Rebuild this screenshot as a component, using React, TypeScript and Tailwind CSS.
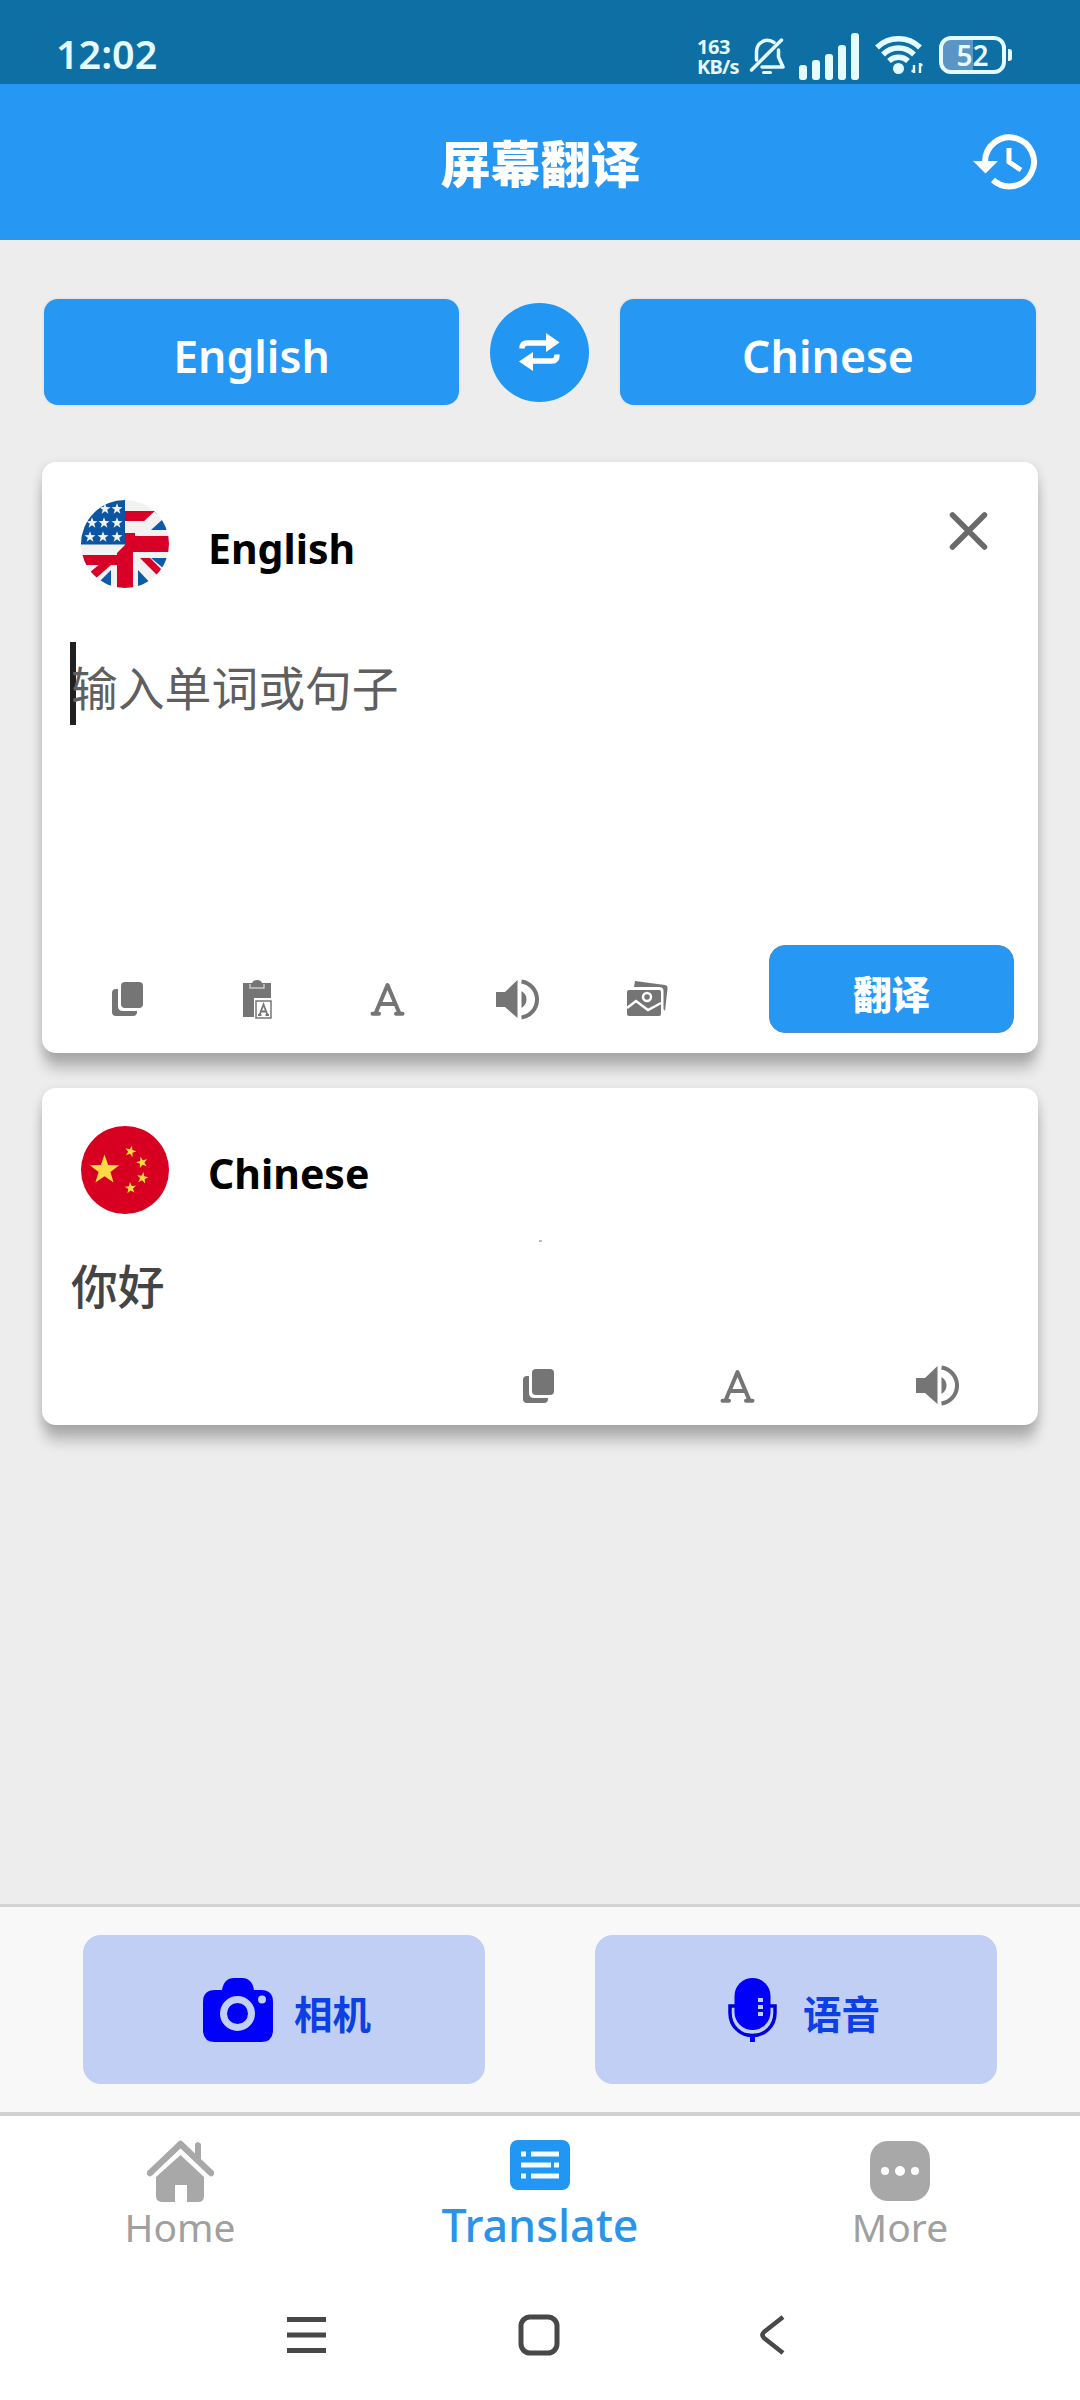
import React from "react";

const LATIN = "font-['Noto_Sans','Noto_Sans_CJK_SC',sans-serif]";
const CJK = "font-['Noto_Sans_CJK_SC',sans-serif]";

type IconProps = { className?: string };

function star(cx: number, cy: number, r: number, rot = 0) {
  return Array.from({ length: 10 }, (_, i) => {
    const radius = i % 2 ? r * 0.4 : r;
    const a = ((i * 36 - 90 + rot) * Math.PI) / 180;
    return `${(cx + radius * Math.cos(a)).toFixed(2)},${(cy + radius * Math.sin(a)).toFixed(2)}`;
  }).join(" ");
}

function CopyIcon({ className = "" }: IconProps) {
  return (
    <svg className={`h-[34px] w-[31px] ${className}`} viewBox="0 0 31 34" fill="#757575">
      <rect x="9" y="0" width="22" height="26" rx="4" />
      <path d="M0 11Q0 7 4 7H6V24Q6 29 11 29H25V30Q25 34 21 34H4Q0 34 0 30Z" />
    </svg>
  );
}

function PasteIcon() {
  return (
    <svg className="h-[39px] w-[29px]" viewBox="0 0 29 39">
      <path d="M0 3H9Q10 0 14 0Q18 0 19 3H28V18H11V37H0Z" fill="#757575" />
      <path d="M7 4V8H21V4" fill="none" stroke="#c8c8c8" strokeWidth="1.5" />
      <rect x="13" y="21" width="15" height="17" fill="#fff" stroke="#757575" strokeWidth="1.5" />
      <path d="M16.5 35L20.5 24.5L24.5 35M18 31.5H23M15 35H18.5M22.500 35H26" fill="none" stroke="#757575" strokeWidth="1.8" />
    </svg>
  );
}

function LetterIcon({ className = "" }: IconProps) {
  return (
    <svg className={`h-[34px] w-[35px] ${className}`} viewBox="0 0 35 34" fill="none" stroke="#757575" strokeWidth="4" strokeLinecap="round" strokeLinejoin="round">
      <path d="M5.500 31.500L17.500 3L29.500 31.500M10 22H25M2.500 31.800H9M26 31.800H32.500" />
    </svg>
  );
}

function SpeakerIcon({ className = "" }: IconProps) {
  return (
    <svg className={`h-[41px] w-[43px] ${className}`} viewBox="0 0 43 41" fill="#757575">
      <path d="M0 13H9L21.500 1V39L9 28H0Z" />
      <path d="M25.500 12Q30.500 15 30.500 20.500T25.500 29Z" />
      <path d="M25.500 2.500A18.200 18.200 0 0 1 25.500 38.500" fill="none" stroke="#757575" strokeWidth="4" />
    </svg>
  );
}

function GalleryIcon() {
  return (
    <svg className="h-[36px] w-[41px]" viewBox="0 0 41 36">
      <path d="M8 0L38 4Q41 4.500 40.500 8L38 30L36.500 28V10Q36.500 6 32 6H7Z" fill="#757575" />
      <rect x="0" y="9" width="34" height="26" rx="2" fill="#757575" />
      <path d="M0 27L9 20L21 29L34 22" fill="none" stroke="#fff" strokeWidth="2.500" />
      <circle cx="20" cy="16" r="4" fill="none" stroke="#fff" strokeWidth="2.500" />
    </svg>
  );
}

function EnglishFlag() {
  const stars = [
    [24, 9], [36, 9], [11, 23], [23, 23], [36, 23], [9, 37], [22, 37], [36, 37],
  ];
  return (
    <svg className="h-[88px] w-[88px]" viewBox="0 0 88 88">
      <defs>
        <clipPath id="disc"><circle cx="44" cy="44" r="44" /></clipPath>
      </defs>
      <g clipPath="url(#disc)">
        <rect width="88" height="88" fill="#f2f2f2" />
        <path d="M44 11H76V21H44ZM0 55H36V65H0Z" fill="#d80027" />
        <path d="M30 65L14 79L8 73L20 63Z" fill="#d80027" />
        <path d="M88 58V73L70 58ZM57 70L74 88H57ZM30 70V88H12Z" fill="#0d5ba8" />
        <path d="M76 9L61 23H44V33H88V9Z" fill="#f2f2f2" />
        <path d="M88 14V30H70L82 19Z" fill="#0d5ba8" />
        <path d="M59 58L78 77L83 72L69 58Z" fill="#d80027" />
        <path d="M44 33H54V36H88V52H52V88H36V53L44 45Z" fill="#d80027" />
        <rect width="44" height="44.500" fill="#0b55a3" />
        {stars.map(([x, y]) => (
          <polygon key={`${x}-${y}`} points={star(x, y, 5.8)} fill="#f2f2f2" />
        ))}
      </g>
    </svg>
  );
}

function ChineseFlag() {
  return (
    <svg className="h-[88px] w-[88px]" viewBox="0 0 88 88">
      <circle cx="44" cy="44" r="44" fill="#d80021" />
      <g fill="#ffda44">
        <polygon points={star(23.5, 44, 15.5)} />
        <polygon points={star(49.500, 25.500, 6, 15)} />
        <polygon points={star(61, 36.500, 6, -15)} />
        <polygon points={star(61.500, 52, 6, 10)} />
        <polygon points={star(49.500, 62, 6, -5)} />
      </g>
    </svg>
  );
}

function StatusBar() {
  return (
    <div className="flex h-[84px] items-start bg-[#0e6fa5] text-[#e4fbff]">
      <div className={`${LATIN} mt-[29px] ml-[56px] w-[641px] text-[39.5px] leading-[50px] font-semibold`}>12:02</div>
      <div className={`${LATIN} mt-[37px] w-[52px] text-[20px] leading-[20px] font-bold whitespace-nowrap`}>
        <div className="tracking-[-0.4px]">163</div>
        <div className="tracking-[-0.8px]">KB/s</div>
      </div>
      <svg className="mt-[36px] h-[40px] w-[37px]" viewBox="0 0 37 40" fill="none" stroke="currentColor" strokeWidth="3.5" strokeLinecap="round" strokeLinejoin="round">
        <path d="M2.500 34L32.500 4" />
        <path d="M7.500 24V15A11 11 0 0 1 25 6.500" />
        <path d="M29.500 14V21L34 31H13" />
        <path d="M14.500 36.500H21.500" strokeWidth="3" />
      </svg>
      <div className="mt-[33px] ml-[13px] flex h-[47px] w-[62px] items-end gap-[5px]">
        <i className="h-[15px] w-2 rounded-[3px] bg-current" />
        <i className="h-[20px] w-2 rounded-[3px] bg-current" />
        <i className="h-[26px] w-2 rounded-[3px] bg-current" />
        <i className="h-[35px] w-2 rounded-[3px] bg-current" />
        <i className="h-[47px] w-2 rounded-[3px] bg-current" />
      </div>
      <svg className="mt-[34px] ml-[14px] h-[41px] w-[49px]" viewBox="0 0 49 41" fill="none" stroke="currentColor" strokeWidth="5.500">
        <path d="M2 13.500A31 31 0 0 1 45 13.500" />
        <path d="M8 20.500A22 22 0 0 1 39 20.500" />
        <path d="M14 27A14 14 0 0 1 33 27" />
        <circle cx="23.500" cy="34.500" r="5.500" fill="currentColor" stroke="none" />
        <path d="M39 31V39M45 29V39M36.500 37H39M45 31H47.500" strokeWidth="2.400" />
      </svg>
      <div className="mt-[36px] ml-[15px] flex items-center">
        <div className={`${LATIN} flex h-[38px] w-[67px] items-center justify-center rounded-[12px] border-4 border-current bg-linear-to-r from-[#5a95c6] from-50% to-[#0e6fa5] to-50% text-[28px] leading-none font-semibold`}>
          52
        </div>
        <div className="ml-[2px] h-3 w-[4px] rounded-r-[3px] bg-current" />
      </div>
    </div>
  );
}

function Header() {
  return (
    <header className="flex h-[156px] items-center justify-between bg-[#2697f2] pr-[42px] pl-[109px]">
      <span />
      <h1 className={`${CJK} -mt-[3px] text-[50px] leading-[60px] font-black text-white`}>屏幕翻译</h1>
      <svg className="-mt-0.5 h-[58px] w-[66px]" viewBox="972 133 66 58" fill="none" stroke="#fff" strokeWidth="6">
        <path d="M985 163A24.500 24.500 0 1 1 993 181" />
        <path d="M973 162H998L985.500 174.500Z" fill="#fff" stroke="none" />
        <path d="M1009 149V163L1021 171" strokeWidth="5" />
      </svg>
    </header>
  );
}

function LanguagePicker() {
  return (
    <div className={`${LATIN} mt-[59px] flex items-center justify-between px-11 text-[44.5px] font-semibold text-white`}>
      <button className="h-[106px] w-[415px] rounded-[14px] bg-[#2697f2] pt-2 shadow-[0_0_2px_1px_#e3e3e3]">English</button>
      <button className="flex size-[99px] items-center justify-center rounded-full bg-[#2196f3]">
        <svg className="h-[38px] w-[41px]" viewBox="0 0 41 38" fill="none" stroke="#fff" strokeWidth="5.500">
          <path d="M3 15.500Q3 10 8 10H29" />
          <path d="M38 21.500Q38 28 33 28H12" />
          <path d="M27 0V19L40.500 9.500Z" fill="#fff" stroke="none" />
          <path d="M14 19V38L0 28.500Z" fill="#fff" stroke="none" />
        </svg>
      </button>
      <button className="h-[106px] w-[416px] rounded-[14px] bg-[#2697f2] pt-2 shadow-[0_0_2px_1px_#e3e3e3]">Chinese</button>
    </div>
  );
}

const CARD = "mx-[42px] rounded-[14px] bg-white shadow-[0_18px_14px_-2px_rgba(0,0,0,0.22),0_4px_10px_2px_rgba(0,0,0,0.11)]";

function SourceCard() {
  return (
    <section className={`${CARD} mt-[57px] flex h-[591px] flex-col`}>
      <div className="flex h-[126px] items-end pl-[39px]">
        <EnglishFlag />
        <span className={`${LATIN} mb-[12px] ml-[39px] text-[41px] leading-[56px] font-bold text-black`}>English</span>
        <svg className="mr-[50px] mb-[38px] ml-auto h-[38px] w-[39px]" viewBox="0 0 39 38" fill="none" stroke="#6a6a6a" strokeWidth="5.500" strokeLinecap="round">
          <path d="M3.500 3L35.500 35M35.500 3L3.500 35" />
        </svg>
      </div>
      <div className="mt-[54px] ml-[28px] flex h-[83px] items-center">
        <i className="h-full w-[6px] bg-[#202020]" />
        <span className={`${CJK} -ml-[5px] pt-[5px] text-[46.8px] leading-[60px] text-[#5f5f5f]`}>输入单词或句子</span>
      </div>
      <div className="mt-auto mb-[20px] flex h-[88px] items-center pr-6 pl-[21px]">
        <div className="grid w-[649px] grid-cols-5 items-center justify-items-center pt-[20px]">
          <CopyIcon />
          <PasteIcon />
          <LetterIcon />
          <SpeakerIcon />
          <GalleryIcon />
        </div>
        <button className={`${CJK} ml-auto h-[88px] w-[245px] rounded-[16px] border border-[#4a8fc9] bg-[#2697f2] pt-2 text-[38.5px] font-black text-white`}>翻译</button>
      </div>
    </section>
  );
}

function ResultCard() {
  return (
    <section className={`${CARD} relative mt-[35px] flex h-[337px] flex-col`}>
      <div className="flex h-[126px] items-end pl-[39px]">
        <ChineseFlag />
        <span className={`${LATIN} mb-[13px] ml-[39px] text-[41px] leading-[56px] font-bold text-black`}>Chinese</span>
      </div>
      <i className="mt-[26px] ml-[497px] h-[2px] w-[3px] bg-[#bbb]" />
      <p className={`${CJK} mt-[12px] ml-[29px] text-[46.800px] leading-[60px] font-medium text-[#444]`}>你好</p>
      <div className="mt-auto mb-[19px] ml-[397px] grid w-[598px] grid-cols-3 items-center justify-items-center">
        <CopyIcon />
        <LetterIcon />
        <SpeakerIcon />
      </div>
    </section>
  );
}

function QuickActions() {
  return (
    <div className={`${CJK} flex h-[212px] items-start justify-between border-t-[3px] border-b-4 border-[#d2d2d2] bg-[#f8f8f8] px-[83px] pt-[28px] text-[38.500px] font-bold text-[#0c3fe4]`}>
      <button className="flex h-[149px] w-[402px] items-center gap-[21px] rounded-[18px] bg-[#c1cff5] pl-[120px]">
        <svg className="h-[64px] w-[70px]" viewBox="0 0 70 64" fill="#0000fb">
          <path d="M12 12H19Q21 0 31 0H39Q49 0 51 12H58Q70 12 70 24V52Q70 64 58 64H12Q0 64 0 52V24Q0 12 12 12Z" />
          <circle cx="34.500" cy="35.500" r="14" fill="none" stroke="#c1cff5" strokeWidth="7" />
          <circle cx="59" cy="21.500" r="4" fill="#c1cff5" />
        </svg>
        <span className="pt-[6px]">相机</span>
      </button>
      <button className="flex h-[149px] w-[402px] items-center gap-[26px] rounded-[18px] bg-[#c1cff5] pl-[133px]">
        <svg className="h-[64px] w-[49px]" viewBox="0 0 49 64" fill="#0000fb">
          <rect x="6.500" y="0" width="36" height="52" rx="18" />
          <path d="M7 28H2V35C2 48 12 57.500 24.500 57.500S47 48 47 35V28H42" fill="none" stroke="#0000d8" strokeWidth="3.500" />
          <path d="M22 57H27V64H22Z" />
          <path d="M30 20H35V24H30ZM30 27H35V31H30ZM30 34H35V38H30Z" fill="#c1cff5" />
        </svg>
        <span className="pt-[6px]">语音</span>
      </button>
    </div>
  );
}

function TabBar() {
  return (
    <nav className={`${LATIN} grid h-[158px] grid-cols-3 bg-white text-[39px] leading-[52px] text-[#a0a0a0]`}>
      <div className="flex flex-col items-center pt-[24px]">
        <svg className="h-[62px] w-[67px]" viewBox="0 0 67 62" fill="#a8a8a8">
          <path d="M3 33L33.500 4L64 33" fill="none" stroke="#a8a8a8" strokeWidth="6.500" strokeLinecap="round" strokeLinejoin="round" />
          <path d="M48 4Q50.500 0 54 4V22L48 16Z" />
          <path d="M33.500 15L57 37V56Q57 62 51 62H40V45H28V62H16Q9 62 9 56V37Z" />
        </svg>
        <span className="-mt-[1px]">Home</span>
      </div>
      <div className="flex flex-col items-center pt-[24px] text-[#2b93ea]">
        <svg className="h-[50px] w-[60px]" viewBox="0 0 60 50">
          <rect width="60" height="50" rx="8" fill="#2196f3" />
          <path d="M11 14H16M21 14H49M11 25H41M44 25H49M11 36H16M21 36H49" stroke="#f2fbff" strokeWidth="5" />
        </svg>
        <span className="mt-[9px] text-[44.8px] font-medium">Translate</span>
      </div>
      <div className="flex flex-col items-center pt-[25px]">
        <svg className="h-[60px] w-[60px]" viewBox="0 0 60 60">
          <rect width="60" height="60" rx="18" fill="#a8a8a8" />
          <g fill="#fff"><circle cx="15" cy="30" r="4" /><circle cx="30" cy="30" r="5" /><circle cx="45" cy="30" r="4" /></g>
        </svg>
        <span>More</span>
      </div>
    </nav>
  );
}

function SystemNav() {
  return (
    <div className="flex flex-1 items-start justify-center bg-white pt-[40px]">
      <div className="grid w-[700px] grid-cols-3 justify-items-center">
        <svg className="h-[42px] w-[41px]" viewBox="0 0 41 42" stroke="#484848" strokeWidth="5">
          <path d="M1 5.500H40M1 21H40M1 36.500H40" />
        </svg>
        <svg className="h-[42px] w-[42px] -translate-x-px" viewBox="0 0 42 42" fill="none" stroke="#484848" strokeWidth="5">
          <rect x="3" y="3" width="36" height="36" rx="9" />
        </svg>
        <svg className="h-[42px] w-[26px] -translate-x-px" viewBox="0 0 26 42" fill="none" stroke="#484848" strokeWidth="4.500" strokeLinejoin="round">
          <path d="M24 3L5 18Q2 21 5 24L24 39" />
        </svg>
      </div>
    </div>
  );
}

export default function App() {
  return (
    <div className="flex h-[2400px] w-[1080px] flex-col overflow-hidden bg-[#ededed]">
      <StatusBar />
      <Header />
      <main className="flex h-[1664px] flex-col">
        <LanguagePicker />
        <SourceCard />
        <ResultCard />
      </main>
      <QuickActions />
      <TabBar />
      <SystemNav />
    </div>
  );
}
